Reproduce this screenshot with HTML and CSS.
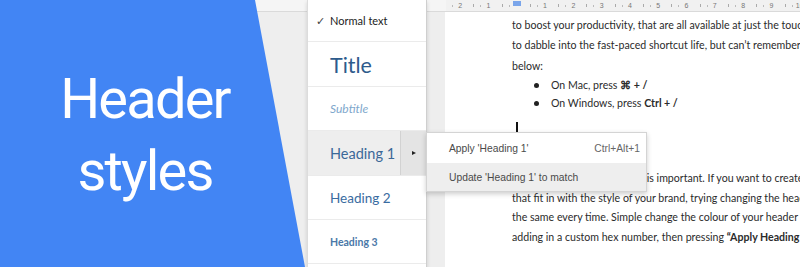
FILE: index.html
```html
<!DOCTYPE html>
<html>
<head lang="en">
  <meta charset="UTF-8">
  <title>Header styles</title>
  <link rel="stylesheet" href="styles.css">
</head>
<body>
  <div class="app">
    <!-- ruler along the top of the editor -->
    <div class="ruler">
      <div class="scale">
        <span class="u">2</span>
        <span class="u">1</span>
        <span class="u mark"><i class="indent"></i></span>
        <span class="u">1</span>
        <span class="u">2</span>
        <span class="u">3</span>
        <span class="u">4</span>
        <span class="u">5</span>
        <span class="u">6</span>
        <span class="u">7</span>
        <span class="u">8</span>
        <span class="u">9</span>
        <span class="u">10</span>
      </div>
    </div>

    <div class="workspace">
      <div class="page">
        <p class="para first">
          <span class="line">with them is often remembering them. With Google Docs, there are loads of shortcuts</span>
          <span class="line">to boost your productivity, that are all available at just the touch of a button</span>
          <span class="line">to dabble into the fast-paced shortcut life, but can’t remember them all, try</span>
          <span class="line">below:</span>
        </p>
        <ul class="bullets">
          <li>On Mac, press <b>⌘ + /</b></li>
          <li>On Windows, press <b>Ctrl + /</b></li>
        </ul>
        <div class="cursor"></div>
        <p class="para second">
          <span class="line">Keeping a brand consistency is important. If you want to create</span>
          <span class="line">that fit in with the style of your brand, trying changing the header styles</span>
          <span class="line">the same every time. Simple change the colour of your header text by</span>
          <span class="line">adding in a custom hex number, then pressing <b>“Apply Heading 1”</b></span>
        </p>
      </div>
    </div>

    <!-- paragraph styles dropdown -->
    <div class="menu">
      <div class="item normal"><span class="check">✓</span>Normal text</div>
      <div class="item title">Title</div>
      <div class="item subtitle">Subtitle</div>
      <div class="item h1 active">
        <span class="label">Heading 1</span>
        <span class="more"><i class="arrow"></i></span>
      </div>
      <div class="item h2">Heading 2</div>
      <div class="item h3">Heading 3</div>
      <div class="item"></div>
    </div>

    <div class="submenu">
      <div class="sub-row"><span>Apply 'Heading 1'</span><span class="keys">Ctrl+Alt+1</span></div>
      <div class="sub-row hover"><span>Update 'Heading 1' to match</span></div>
    </div>

    <!-- blue banner with the heading -->
    <div class="banner">
      <h1>Header<br>styles</h1>
    </div>
  </div>
</body>
</html>
```

FILE: styles.css
```css
* {
  margin: 0;
  padding: 0;
  box-sizing: border-box;
}
body {
  width: 800px;
  height: 267px;
  overflow: hidden;
  background: #eeeeee;
}
ul {
  list-style: none;
}
i {
  font-style: normal;
}
.app {
  position: relative;
  width: 800px;
  height: 267px;
  overflow: hidden;
}

/* ruler */
.ruler {
  height: 12px;
  background: #f5f5f5;
  border-bottom: 1px solid #dadada;
}
.scale {
  display: flex;
  margin-left: 446px;
  height: 11px;
  background: #f1f1f1;
}
.u {
  position: relative;
  width: 28.3px;
  flex: none;
  text-align: center;
  font: 7px/11px "Liberation Sans", Arial, sans-serif;
  color: #777;
}
.u::after {
  content: "";
  position: absolute;
  right: 0;
  top: 4px;
  width: 1px;
  height: 3px;
  background: #aaa;
}
.u::before {
  content: "";
  position: absolute;
  left: 6px;
  top: 5px;
  width: 1px;
  height: 2px;
  background: #bbb;
}
.indent {
  display: inline-block;
  width: 8px;
  height: 5px;
  margin-top: 1px;
  background: #7aa5ea;
  vertical-align: top;
}

/* document */
.workspace {
  display: flex;
  height: 255px;
  overflow: hidden;
  background: #eeeeee;
}
.page {
  margin-left: 445px;
  width: 600px;
  flex: none;
  background: #fff;
  padding-left: 67px;
  font-family: Lato, "Open Sans", sans-serif;
  font-size: 10.6px;
  color: #2b2b2b;
}
.para .line {
  display: block;
  white-space: nowrap;
  height: 20.5px;
  line-height: 20.5px;
}
.para.first {
  margin-top: -18px;
}
.bullets {
  margin-top: 0;
  padding-left: 22px;
}
.bullets li {
  position: relative;
  height: 18px;
  line-height: 18px;
  padding-left: 17px;
  white-space: nowrap;
}
.bullets li::before {
  content: "";
  position: absolute;
  left: 0;
  top: 7px;
  width: 5px;
  height: 5px;
  border-radius: 50%;
  background: #222;
}
.cursor {
  width: 2px;
  height: 11px;
  margin: 10px 0 0 4px;
  background: #111;
}
.para.second {
  margin-top: 36px;
}
.para.second .line {
  height: 19.7px;
  line-height: 19.7px;
}

/* dropdown */
.menu {
  position: absolute;
  left: 307px;
  top: 0;
  width: 120px;
  height: 280px;
  background: #fff;
  border-left: 1px solid #dcdcdc;
  border-right: 1px solid #cfcfcf;
  box-shadow: 0 2px 4px rgba(0, 0, 0, 0.15);
  font-family: Lato, "Open Sans", sans-serif;
}
.item {
  display: flex;
  align-items: center;
  height: 44px;
  padding-left: 22px;
  border-bottom: 1px solid #ebebeb;
  color: #3a6a9b;
  white-space: nowrap;
}
.item.normal {
  height: 42px;
  padding-left: 8px;
  font-size: 11px;
  color: #222;
}
.check {
  width: 14px;
  font-size: 11px;
  color: #444;
}
.item.title {
  height: 45px;
  font-size: 21.5px;
  color: #2d5b8c;
  padding-top: 2px;
}
.item.subtitle {
  font-style: italic;
  font-size: 12px;
  color: #7ea7cc;
}
.item.h1 {
  height: 45px;
  padding-right: 0;
  background: #eeeeee;
  font-size: 14.5px;
  color: #3b6898;
}
.item.h1 .label {
  flex: 1;
}
.more {
  display: flex;
  align-items: center;
  justify-content: center;
  width: 26px;
  height: 100%;
  background: #e4e4e4;
  border-left: 1px solid #d2d2d2;
}
.arrow {
  width: 0;
  height: 0;
  border-left: 4px solid #222;
  border-top: 2.5px solid transparent;
  border-bottom: 2.5px solid transparent;
}
.item.h2 {
  font-size: 13.5px;
  color: #3a6ca1;
}
.item.h3 {
  font-size: 10.5px;
  font-weight: bold;
  color: #4a78a8;
}

/* submenu */
.submenu {
  position: absolute;
  left: 426px;
  top: 132px;
  width: 221px;
  height: 60px;
  background: #fff;
  border: 1px solid #d4d4d4;
  box-shadow: 0 2px 5px rgba(0, 0, 0, 0.2);
  padding-top: 1px;
  font: 10.3px "Liberation Sans", Arial, sans-serif;
  color: #4a4a4a;
}
.sub-row {
  display: flex;
  justify-content: space-between;
  align-items: center;
  height: 29px;
  padding: 0 6px 0 22px;
  white-space: nowrap;
}
.sub-row.hover {
  background: #eeeeee;
  height: 28px;
}
.keys {
  color: #666;
}

/* banner */
.banner {
  position: absolute;
  left: 0;
  top: 0;
  width: 306px;
  height: 267px;
  background: #4285f4;
  clip-path: polygon(0 0, 255px 0, 305px 267px, 0 267px);
}
.banner h1 {
  width: 290px;
  margin-top: 63px;
  text-align: center;
  font: 400 56px/72px Roboto, sans-serif;
  letter-spacing: -1.8px;
  color: #fff;
}
```
